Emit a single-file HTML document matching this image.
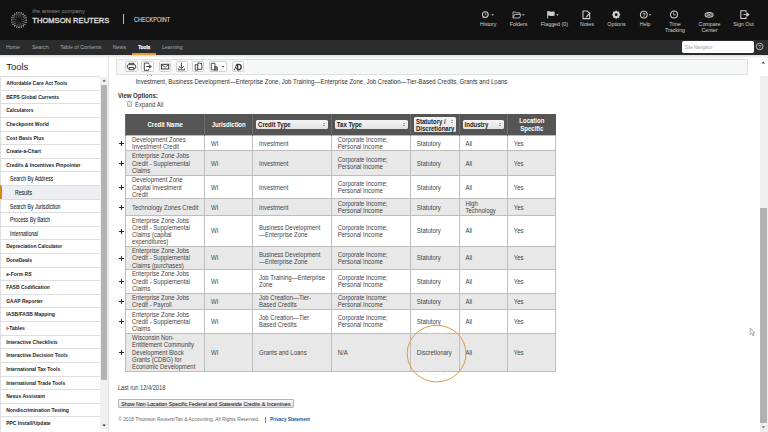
<!DOCTYPE html>
<html><head><meta charset="utf-8"><style>
*{box-sizing:border-box;margin:0;padding:0}
html,body{width:768px;height:432px;overflow:hidden;background:#fff;font-family:"Liberation Sans",sans-serif;position:relative}
.abs{position:absolute}
#hdr{left:0;top:0;width:768px;height:39.5px;background:#121212}
#nav{left:0;top:39.5px;width:768px;height:15px;background:#2b2c2e}
#shadow{left:0;top:54.5px;width:768px;height:3px;background:linear-gradient(#dcdcdc,#fff)}
.nv{position:absolute;top:44px;font-size:5.3px;color:#a9abae;line-height:6px;white-space:nowrap}
.hi{position:absolute;font-size:5.3px;color:#d2d2d2;line-height:6.3px;text-align:center;white-space:nowrap}
.si{position:absolute;left:0;width:100px;height:13.6px;border-top:0.6px solid #dedede;font-size:5px;font-weight:bold;color:#222;line-height:13px;padding-left:6.2px;white-space:nowrap}
.si.sub{font-weight:normal;padding-left:10px;color:#333}
.si.res{padding-left:13px;background:#eceef1;border-left:2px solid #d9850f;font-weight:normal}
#tb{left:116.3px;top:59.1px;width:631.7px;height:15.8px;background:#f6f7f7;border:0.6px solid #dfdfdf}
.btn{position:absolute;top:61px;height:10.8px;width:13px;background:#fff;border:0.6px solid #cfcfcf;border-radius:1.6px}
table{position:absolute;left:125.5px;top:114.2px;width:430.3px;border-collapse:collapse;table-layout:fixed;font-size:6px;color:#333}
th{background:#555;color:#fff;font-weight:bold;height:21.2px;border-left:0.6px solid #6d6d6d;text-align:center;line-height:7.4px;padding:0}
td{border:0.6px solid #bdbdbd;line-height:7.2px;padding:0 0 0 5.9px;vertical-align:middle}
td span{display:inline-block;transform:translateY(0.6px) scaleY(1.17);transform-origin:50% 60%;color:#444}
tr.g td{background:#e8e8e8}
.sel{display:block;margin:0 2.4px 0 3px;height:9.2px;background:linear-gradient(#f4f4f4,#e2e2e2);border-radius:1.5px;color:#222;text-align:left;padding-left:2px;line-height:9.2px;position:relative}
.sel.tall{height:15px;line-height:7.2px;padding-top:0.5px}
.sel:after{content:"";position:absolute;right:3px;top:3px;width:0;height:0;border-left:0.9px solid transparent;border-right:0.9px solid transparent;border-bottom:1.2px solid #555}
.sel:before{content:"";position:absolute;right:3px;top:5px;width:0;height:0;border-left:0.9px solid transparent;border-right:0.9px solid transparent;border-top:1.2px solid #555}
.plus{position:absolute;left:118.8px;width:5px;height:5px}
.plus:before{content:"";position:absolute;left:0;top:2px;width:5px;height:1px;background:#2a2a2a}
.plus:after{content:"";position:absolute;left:2px;top:0;width:1px;height:5px;background:#2a2a2a}

.sy{transform:scaleY(1.17);transform-origin:0 60%}

.si span{display:inline-block;transform:scaleY(1.15);transform-origin:0 55%}
.si.sub,.si.res{color:#111;font-size:5.1px}
.si.sub span,.si.res span{transform:translateY(0.9px) scaleY(1.26);-webkit-text-stroke:0.04px #111}
th i{font-style:normal;display:inline-block;transform:translateY(1.3px) scaleY(1.12);transform-origin:0 55%}
tr.r1 td span{transform:translateY(0.6px) scaleY(1.17)}

</style></head><body>
<div id="hdr" class="abs"></div><div id="nav" class="abs"></div><div id="shadow" class="abs"></div>
<svg class="abs" style="left:9.7px;top:10.9px" width="18" height="18" viewBox="0 0 18 18"><circle cx="16.40" cy="9.00" r="0.62" fill="#e6e6e6"/><circle cx="16.04" cy="11.29" r="0.62" fill="#e6e6e6"/><circle cx="14.99" cy="13.35" r="0.62" fill="#e6e6e6"/><circle cx="13.35" cy="14.99" r="0.62" fill="#e6e6e6"/><circle cx="11.29" cy="16.04" r="0.62" fill="#e6e6e6"/><circle cx="9.00" cy="16.40" r="0.62" fill="#e6e6e6"/><circle cx="6.71" cy="16.04" r="0.62" fill="#e6e6e6"/><circle cx="4.65" cy="14.99" r="0.62" fill="#e6e6e6"/><circle cx="3.01" cy="13.35" r="0.62" fill="#e6e6e6"/><circle cx="1.96" cy="11.29" r="0.62" fill="#e6e6e6"/><circle cx="1.60" cy="9.00" r="0.62" fill="#e6e6e6"/><circle cx="1.96" cy="6.71" r="0.62" fill="#e6e6e6"/><circle cx="3.01" cy="4.65" r="0.62" fill="#e6e6e6"/><circle cx="4.65" cy="3.01" r="0.62" fill="#e6e6e6"/><circle cx="6.71" cy="1.96" r="0.62" fill="#e6e6e6"/><circle cx="9.00" cy="1.60" r="0.62" fill="#e6e6e6"/><circle cx="11.29" cy="1.96" r="0.62" fill="#e6e6e6"/><circle cx="13.35" cy="3.01" r="0.62" fill="#e6e6e6"/><circle cx="14.99" cy="4.65" r="0.62" fill="#e6e6e6"/><circle cx="16.04" cy="6.71" r="0.62" fill="#e6e6e6"/><circle cx="14.69" cy="11.21" r="0.5" fill="#b8b8b8"/><circle cx="13.59" cy="13.02" r="0.5" fill="#b8b8b8"/><circle cx="11.94" cy="14.35" r="0.5" fill="#b8b8b8"/><circle cx="9.93" cy="15.03" r="0.5" fill="#b8b8b8"/><circle cx="7.82" cy="14.98" r="0.5" fill="#b8b8b8"/><circle cx="5.84" cy="14.22" r="0.5" fill="#b8b8b8"/><circle cx="4.25" cy="12.82" r="0.5" fill="#b8b8b8"/><circle cx="3.23" cy="10.97" r="0.5" fill="#b8b8b8"/><circle cx="2.90" cy="8.87" r="0.5" fill="#b8b8b8"/><circle cx="3.31" cy="6.79" r="0.5" fill="#b8b8b8"/><circle cx="4.41" cy="4.98" r="0.5" fill="#b8b8b8"/><circle cx="6.06" cy="3.65" r="0.5" fill="#b8b8b8"/><circle cx="8.07" cy="2.97" r="0.5" fill="#b8b8b8"/><circle cx="10.18" cy="3.02" r="0.5" fill="#b8b8b8"/><circle cx="12.16" cy="3.78" r="0.5" fill="#b8b8b8"/><circle cx="13.75" cy="5.18" r="0.5" fill="#b8b8b8"/><circle cx="14.77" cy="7.03" r="0.5" fill="#b8b8b8"/><circle cx="15.10" cy="9.13" r="0.5" fill="#b8b8b8"/><circle cx="12.54" cy="12.24" r="0.45" fill="#9a9a9a"/><circle cx="10.92" cy="13.40" r="0.45" fill="#9a9a9a"/><circle cx="8.97" cy="13.80" r="0.45" fill="#9a9a9a"/><circle cx="7.02" cy="13.37" r="0.45" fill="#9a9a9a"/><circle cx="5.41" cy="12.19" r="0.45" fill="#9a9a9a"/><circle cx="4.42" cy="10.45" r="0.45" fill="#9a9a9a"/><circle cx="4.23" cy="8.47" r="0.45" fill="#9a9a9a"/><circle cx="4.86" cy="6.57" r="0.45" fill="#9a9a9a"/><circle cx="6.21" cy="5.10" r="0.45" fill="#9a9a9a"/><circle cx="8.03" cy="4.30" r="0.45" fill="#9a9a9a"/><circle cx="10.03" cy="4.31" r="0.45" fill="#9a9a9a"/><circle cx="11.85" cy="5.14" r="0.45" fill="#9a9a9a"/><circle cx="13.17" cy="6.63" r="0.45" fill="#9a9a9a"/><circle cx="13.78" cy="8.53" r="0.45" fill="#9a9a9a"/><circle cx="13.55" cy="10.52" r="0.45" fill="#9a9a9a"/><circle cx="10.60" cy="12.22" r="0.42" fill="#8a8a8a"/><circle cx="8.60" cy="12.58" r="0.42" fill="#8a8a8a"/><circle cx="6.73" cy="11.80" r="0.42" fill="#8a8a8a"/><circle cx="5.58" cy="10.13" r="0.42" fill="#8a8a8a"/><circle cx="5.51" cy="8.10" r="0.42" fill="#8a8a8a"/><circle cx="6.56" cy="6.36" r="0.42" fill="#8a8a8a"/><circle cx="8.37" cy="5.46" r="0.42" fill="#8a8a8a"/><circle cx="10.39" cy="5.68" r="0.42" fill="#8a8a8a"/><circle cx="11.96" cy="6.96" r="0.42" fill="#8a8a8a"/><circle cx="12.60" cy="8.88" r="0.42" fill="#8a8a8a"/><circle cx="12.09" cy="10.85" r="0.42" fill="#8a8a8a"/><circle cx="9.23" cy="11.49" r="0.38" fill="#6a6a6a"/><circle cx="7.19" cy="10.73" r="0.38" fill="#6a6a6a"/><circle cx="6.52" cy="8.67" r="0.38" fill="#6a6a6a"/><circle cx="7.72" cy="6.86" r="0.38" fill="#6a6a6a"/><circle cx="9.88" cy="6.66" r="0.38" fill="#6a6a6a"/><circle cx="11.38" cy="8.22" r="0.38" fill="#6a6a6a"/><circle cx="11.09" cy="10.38" r="0.38" fill="#6a6a6a"/></svg>
<div class="abs" style="left:32.3px;top:8.4px;font-size:5.7px;color:#8a8a8a;line-height:6px;white-space:nowrap">the answer company</div>
<div class="abs" style="left:32.3px;top:16.9px;font-size:7.5px;color:#e0e0e0;-webkit-text-stroke:0.3px #e0e0e0;line-height:8px;white-space:nowrap;letter-spacing:0.05px">THOMSON REUTERS</div>
<div class="abs" style="left:123px;top:14px;width:0.8px;height:10px;background:#bdbdbd"></div>
<div class="abs" style="left:134.4px;top:16.6px;font-size:6.4px;color:#dcdcdc;-webkit-text-stroke:0.1px #dcdcdc;line-height:6px;white-space:nowrap;transform:scaleX(0.86);transform-origin:0 50%">CHECKPOINT</div>
<div class="nv" style="left:5.9px;">Home</div>
<div class="nv" style="left:31.9px;">Search</div>
<div class="nv" style="left:60.2px;">Table of Contents</div>
<div class="nv" style="left:112.8px;">News</div>
<div class="nv" style="left:137.9px;color:#fff;-webkit-text-stroke:0.25px #fff">Tools</div>
<div class="nv" style="left:161.9px;">Learning</div>
<div class="abs" style="left:131.9px;top:53.2px;width:24.2px;height:1.4px;background:#e89a2c"></div>
<div class="hi" style="left:458.2px;width:60px;top:21px">History</div>
<div class="hi" style="left:488.5px;width:60px;top:21px">Folders</div>
<div class="hi" style="left:524.4px;width:60px;top:21px">Flagged (0)</div>
<div class="hi" style="left:557px;width:60px;top:21px">Notes</div>
<div class="hi" style="left:586.5px;width:60px;top:21px">Options</div>
<div class="hi" style="left:615.1px;width:60px;top:21px">Help</div>
<div class="hi" style="left:645px;width:60px;top:21px">Time<br>Tracking</div>
<div class="hi" style="left:679.5px;width:60px;top:21px">Compare<br>Center</div>
<div class="hi" style="left:713.5px;width:60px;top:21px">Sign Out</div>
<svg class="abs" style="left:480px;top:9px" width="100" height="11" viewBox="0 0 100 11">
<!-- history -->
<circle cx="5.3" cy="5.6" r="2.9" fill="none" stroke="#d0d0d0" stroke-width="1.05"/>
<path d="M5.3 4.2 V5.8 H6.6" fill="none" stroke="#d0d0d0" stroke-width="0.7"/>
<path d="M2.2 7.5 L3.2 9.2 L4.5 8" fill="#d0d0d0"/>
<path d="M11.3 5.3 h2.6 l-1.3 1.4z" fill="#d0d0d0"/>
<!-- folders -->
<path d="M33 3 h2.8 l0.8 0.9 h3.4 v1.2 M33 3 v6 h6.6 l1.2 -3.6 h-6.3 l-1.4 3.6" fill="none" stroke="#d0d0d0" stroke-width="0.8"/>
<path d="M42.1 5.3 h2.6 l-1.3 1.4z" fill="#d0d0d0"/>
<!-- flag -->
<path d="M67.6 2 v7.5" stroke="#d0d0d0" stroke-width="0.9"/>
<path d="M68 2.5 c1.5-0.7 2.6 0.6 4 0.2 c0.8-0.2 1.7-0.3 2.6 0 v4.1 c-1.2-0.4-2.1 0-3 0.2 c-1.3 0.3-2.3-0.8-3.6-0.3z" fill="#d0d0d0"/>
<path d="M76.2 5.3 h2.6 l-1.3 1.4z" fill="#d0d0d0"/>
</svg>
<svg class="abs" style="left:580px;top:9px" width="188" height="11" viewBox="0 0 188 11">
<!-- notes -->
<path d="M3 2 h4.2 l2.5 2.5 v5.1 h-6.7z" fill="none" stroke="#d0d0d0" stroke-width="1.05"/>
<path d="M6 7.5 l3.8-4.2 l0.9 0.8 l-3.8 4.2 l-1.2 0.3z" fill="#d0d0d0"/>
<!-- options gear -->
<g transform="translate(36.2,5.7)">
<circle r="2.6" fill="none" stroke="#d0d0d0" stroke-width="1.5"/>
<g fill="#d0d0d0">
<rect x="-0.8" y="-4" width="1.6" height="8"/>
<rect x="-0.8" y="-4" width="1.6" height="8" transform="rotate(45)"/>
<rect x="-0.8" y="-4" width="1.6" height="8" transform="rotate(90)"/>
<rect x="-0.8" y="-4" width="1.6" height="8" transform="rotate(135)"/>
</g>
<circle r="1.4" fill="#121212"/>
</g>
<!-- help -->
<circle cx="63.8" cy="5.6" r="3.4" fill="none" stroke="#d0d0d0" stroke-width="1.05"/>
<text x="63.8" y="7.7" font-size="5.4" font-family="Liberation Sans" font-weight="bold" fill="#d0d0d0" text-anchor="middle">?</text>
<path d="M68.7 5.3 h2.6 l-1.3 1.4z" fill="#d0d0d0"/>
<!-- time tracking clock -->
<circle cx="94" cy="5.5" r="3.5" fill="none" stroke="#d0d0d0" stroke-width="1.05"/>
<path d="M93.6 3.4 V5.9 H95.8" fill="none" stroke="#d0d0d0" stroke-width="0.8"/>
<!-- compare -->
<ellipse cx="129.1" cy="5.8" rx="4" ry="2.4" fill="none" stroke="#d0d0d0" stroke-width="1.05"/>
<circle cx="127.9" cy="5.8" r="1.15" fill="none" stroke="#d0d0d0" stroke-width="0.8"/><circle cx="130.3" cy="5.8" r="1.15" fill="none" stroke="#d0d0d0" stroke-width="0.8"/>
<!-- sign out -->
<path d="M166 3.3 v-1.5 h-5.2 v7.6 h5.2 v-1.5" fill="none" stroke="#d0d0d0" stroke-width="1.05"/>
<path d="M163.5 5.6 h3.3 v-1.8 l2.3 1.8 l-2.3 1.8 v-1.8" fill="#d0d0d0" stroke="#d0d0d0" stroke-width="0.9"/>
</svg>
<div class="abs" style="left:681.5px;top:41.1px;width:72.7px;height:11.5px;background:#fff;border-radius:1.8px"></div>
<div class="abs" style="left:684.7px;top:43.8px;font-size:5px;color:#a0a0a0;line-height:6px;white-space:nowrap;transform:scaleX(0.88) scaleY(1.05);transform-origin:0 50%">Site Navigator</div>
<svg class="abs" style="left:755px;top:42px" width="10" height="10" viewBox="0 0 10 10">
<circle cx="4.6" cy="4.5" r="3.3" fill="none" stroke="#d4d4d4" stroke-width="0.8"/>
<text x="4.6" y="6.5" font-size="5" font-family="Liberation Sans" fill="#d4d4d4" text-anchor="middle">?</text></svg>
<div class="abs" style="left:108.3px;top:54.5px;width:0.7px;height:377.5px;background:#e2e2e2"></div>
<div class="abs" style="left:6.2px;top:60.5px;font-size:9.5px;color:#222;line-height:11px;white-space:nowrap">Tools</div>
<div class="abs" style="left:0;top:76.9px;width:0.6px;height:356px;background:#dedede"></div>
<div class="si " style="top:76.10px"><span>Affordable Care Act Tools</span></div>
<div class="si " style="top:89.71px"><span>BEPS Global Currents</span></div>
<div class="si " style="top:103.32px"><span>Calculators</span></div>
<div class="si " style="top:116.93px"><span>Checkpoint World</span></div>
<div class="si " style="top:130.54px"><span>Cost Basis Plus</span></div>
<div class="si " style="top:144.15px"><span>Create-a-Chart</span></div>
<div class="si " style="top:157.76px"><span>Credits &amp; Incentives Pinpointer</span></div>
<div class="si sub" style="top:171.37px"><span>Search By Address</span></div>
<div class="si res" style="top:184.98px"><span>Results</span></div>
<div class="si sub" style="top:198.59px"><span>Search By Jurisdiction</span></div>
<div class="si sub" style="top:212.20px"><span>Process By Batch</span></div>
<div class="si sub" style="top:225.81px"><span>International</span></div>
<div class="si " style="top:239.42px"><span>Depreciation Calculator</span></div>
<div class="si " style="top:253.03px"><span>DoneDeals</span></div>
<div class="si " style="top:266.64px"><span>e-Form <i>RS</i></span></div>
<div class="si " style="top:280.25px"><span>FASB Codification</span></div>
<div class="si " style="top:293.86px"><span>GAAP Reporter</span></div>
<div class="si " style="top:307.47px"><span>IASB/FASB Mapping</span></div>
<div class="si " style="top:321.08px"><span>i-Tables</span></div>
<div class="si " style="top:334.69px"><span>Interactive Checklists</span></div>
<div class="si " style="top:348.30px"><span>Interactive Decision Tools</span></div>
<div class="si " style="top:361.91px"><span>International Tax Tools</span></div>
<div class="si " style="top:375.52px"><span>International Trade Tools</span></div>
<div class="si " style="top:389.13px"><span>Nexus Assistant</span></div>
<div class="si " style="top:402.74px"><span>Nondiscrimination Testing</span></div>
<div class="si " style="top:416.35px"><span>PPC Install/Update</span></div>
<div class="abs" style="left:100px;top:76.9px;width:8.3px;height:352.5px;background:#f0f0f0"></div>
<div class="abs" style="left:100.6px;top:85px;width:6.6px;height:295px;background:#b3b3b3"></div>
<svg class="abs" style="left:100px;top:78px" width="8.3" height="5" viewBox="0 0 8.3 5"><path d="M2.4 3.6 h3.5 l-1.75-2z" fill="#555"/></svg>
<svg class="abs" style="left:100px;top:423px" width="8.3" height="5" viewBox="0 0 8.3 5"><path d="M2.4 1.4 h3.5 l-1.75 2z" fill="#333"/></svg>
<div class="abs" style="left:760.2px;top:76px;width:7.8px;height:356px;background:#efefef"></div>
<div class="abs" style="left:760.4px;top:207.8px;width:6.8px;height:215.4px;background:#b2b2b2"></div>
<svg class="abs" style="left:759.4px;top:60px" width="8.6" height="5" viewBox="0 0 8.6 5"><path d="M2.5 3.6 h3.6 l-1.8-2z" fill="#444"/></svg>
<svg class="abs" style="left:759.4px;top:425px" width="8.6" height="5" viewBox="0 0 8.6 5"><path d="M2.5 1.2 h3.6 l-1.8 2z" fill="#777"/></svg>
<div id="tb" class="abs"></div>
<div class="btn" style="left:124.5px;width:13px"></div>
<div class="btn" style="left:141.4px;width:12.9px"></div>
<div class="btn" style="left:158.9px;width:12.4px"></div>
<div class="btn" style="left:175.5px;width:12.4px"></div>
<div class="btn" style="left:192.1px;width:12.1px"></div>
<div class="btn" style="left:208.8px;width:18.6px"></div>
<div class="btn" style="left:231.5px;width:12.6px"></div>
<svg class="abs" style="left:118px;top:58px" width="130" height="18" viewBox="0 0 130 18">
<!-- print -->
<g fill="#fff" stroke="#3a3a3a" stroke-width="0.95">
<rect x="11.2" y="5.3" width="4.6" height="2" />
<rect x="9.3" y="6.7" width="8.4" height="3.9" rx="1.3"/>
<rect x="11.2" y="9.5" width="4.6" height="2.3"/>
</g>
<!-- export -->
<path d="M30.7 6.3 V5.1 H26.3 V12.3 H30.7 V11.1" fill="none" stroke="#3a3a3a" stroke-width="0.95"/>
<path d="M28.3 8 h2.8 v-1.6 l2.8 2.1 l-2.8 2.1 v-1.6 h-2.8z" fill="#3a3a3a"/>
<!-- email -->
<rect x="43.4" y="6.3" width="7.3" height="4.7" fill="none" stroke="#3a3a3a" stroke-width="1.05"/>
<path d="M43.6 6.7 l3.5 2.5 l3.5-2.5" fill="none" stroke="#3a3a3a" stroke-width="0.8"/>
<!-- download -->
<path d="M63.4 4.9 v5.6 M61 8.2 l2.4 2.4 l2.4-2.4 M60.4 10.6 v1.3 h6.1 v-1.3" fill="none" stroke="#3a3a3a" stroke-width="0.95"/>
<!-- copy -->
<path d="M77.2 6.6 h2.8 v5.5 h-2.8z" fill="#fff" stroke="#3a3a3a" stroke-width="0.9"/>
<path d="M79.8 5.1 h2.4 l1.6 1.6 v4.6 h-4z" fill="#fff" stroke="#3a3a3a" stroke-width="0.9"/>
<path d="M82 5 l1.9 1.9 v-1.9z" fill="#3a3a3a"/>
<!-- doc dropdown -->
<path d="M93.3 5.3 h3.6 v6.6 h-3.6z" fill="#fff" stroke="#3a3a3a" stroke-width="0.9"/>
<path d="M96.6 8.3 h1.9 l1 1 v3 h-2.9z" fill="#777" stroke="#3a3a3a" stroke-width="0.6"/>
<path d="M103.9 8 h2.6 l-1.3 1.4z" fill="#3a3a3a"/>
<!-- AD -->
<path d="M116.4 12.1 L118.9 5.8" stroke="#3a3a3a" stroke-width="1"/>
<path d="M119.6 6.4 h1 c1.7 0 2.6 1.1 2.6 2.7 c0 1.6 -0.9 2.7 -2.6 2.7 h-1 z" fill="none" stroke="#3a3a3a" stroke-width="1.4"/>
<path d="M118.2 9.6 l1.2 2.2" stroke="#3a3a3a" stroke-width="0.9"/>
</svg>
<div class="abs sy" style="left:135.7px;top:79.2px;font-size:6px;color:#333;line-height:7px;white-space:nowrap">Investment, Business Development—Enterprise Zone, Job Training—Enterprise Zone, Job Creation—Tier-Based Credits, Grants and Loans</div>
<div class="abs" style="left:147px;top:74.6px;width:1px;height:1px;background:#999"></div><div class="abs" style="left:150.5px;top:74.6px;width:1px;height:1px;background:#999"></div>
<div class="abs sy" style="left:117.9px;top:92.7px;font-size:6px;font-weight:bold;color:#333;line-height:7px;white-space:nowrap">View Options:</div>
<div class="abs" style="left:127.3px;top:101.3px;width:4.8px;height:5.4px;border:0.6px solid #b0b0b0;background:linear-gradient(#f4f4f4,#dcdcdc);border-radius:1px"></div>
<div class="abs sy" style="left:135px;top:101.9px;font-size:6px;color:#444;line-height:7px;white-space:nowrap">Expand All</div>
<table style="left:125.1px"><colgroup><col style="width:79.1px"><col style="width:47.9px"><col style="width:78.75px"><col style="width:79.15px"><col style="width:48.6px"><col style="width:48.3px"><col style="width:48.5px"></colgroup><tr><th><i>Credit Name</i></th><th><i>Jurisdiction</i></th><th><span class="sel"><i>Credit Type</i></span></th><th><span class="sel"><i>Tax Type</i></span></th><th><span class="sel tall"><i>Statutory /</i><br><i>Discretionary</i></span></th><th><span class="sel"><i>Industry</i></span></th><th><i>Location</i><br><i>Specific</i></th></tr><tr class="w r1" style="height:15.6px"><td><span>Development Zones</span><br><span>Investment Credit</span></td><td><span>WI</span></td><td><span>Investment</span></td><td><span>Corporate Income;</span><br><span>Personal Income</span></td><td><span>Statutory</span></td><td><span>All</span></td><td><span>Yes</span></td></tr><tr class="g" style="height:24.3px"><td><span>Enterprise Zone Jobs</span><br><span>Credit - Supplemental</span><br><span>Claims</span></td><td><span>WI</span></td><td><span>Investment</span></td><td><span>Corporate Income;</span><br><span>Personal Income</span></td><td><span>Statutory</span></td><td><span>All</span></td><td><span>Yes</span></td></tr><tr class="w" style="height:23.7px"><td><span>Development Zone</span><br><span>Capital Investment</span><br><span>Credit</span></td><td><span>WI</span></td><td><span>Investment</span></td><td><span>Corporate Income;</span><br><span>Personal Income</span></td><td><span>Statutory</span></td><td><span>All</span></td><td><span>Yes</span></td></tr><tr class="g" style="height:16.4px"><td><span>Technology Zones Credit</span></td><td><span>WI</span></td><td><span>Investment</span></td><td><span>Corporate Income;</span><br><span>Personal Income</span></td><td><span>Statutory</span></td><td><span>High</span><br><span>Technology</span></td><td><span>Yes</span></td></tr><tr class="w" style="height:31.2px"><td><span>Enterprise Zone Jobs</span><br><span>Credit - Supplemental</span><br><span>Claims (capital</span><br><span>expenditures)</span></td><td><span>WI</span></td><td><span>Business Development</span><br><span>—Enterprise Zone</span></td><td><span>Corporate Income;</span><br><span>Personal Income</span></td><td><span>Statutory</span></td><td><span>All</span></td><td><span>Yes</span></td></tr><tr class="g" style="height:22.8px"><td><span>Enterprise Zone Jobs</span><br><span>Credit - Supplemental</span><br><span>Claims (purchases)</span></td><td><span>WI</span></td><td><span>Business Development</span><br><span>—Enterprise Zone</span></td><td><span>Corporate Income;</span><br><span>Personal Income</span></td><td><span>Statutory</span></td><td><span>All</span></td><td><span>Yes</span></td></tr><tr class="w" style="height:23.9px"><td><span>Enterprise Zone Jobs</span><br><span>Credit - Supplemental</span><br><span>Claims</span></td><td><span>WI</span></td><td><span>Job Training—Enterprise</span><br><span>Zone</span></td><td><span>Corporate Income;</span><br><span>Personal Income</span></td><td><span>Statutory</span></td><td><span>All</span></td><td><span>Yes</span></td></tr><tr class="g" style="height:16.0px"><td><span>Enterprise Zone Jobs</span><br><span>Credit - Payroll</span></td><td><span>WI</span></td><td><span>Job Creation—Tier-</span><br><span>Based Credits</span></td><td><span>Corporate Income;</span><br><span>Personal Income</span></td><td><span>Statutory</span></td><td><span>All</span></td><td><span>Yes</span></td></tr><tr class="w" style="height:24.2px"><td><span>Enterprise Zone Jobs</span><br><span>Credit - Supplemental</span><br><span>Claims</span></td><td><span>WI</span></td><td><span>Job Creation—Tier</span><br><span>Based Credits</span></td><td><span>Corporate Income;</span><br><span>Personal Income</span></td><td><span>Statutory</span></td><td><span>All</span></td><td><span>Yes</span></td></tr><tr class="g" style="height:37.6px"><td><span>Wisconsin Non-</span><br><span>Entitlement Community</span><br><span>Development Block</span><br><span>Grants (CDBG) for</span><br><span>Economic Development</span></td><td><span>WI</span></td><td><span>Grants and Loans</span></td><td><span>N/A</span></td><td><span>Discretionary</span></td><td><span>All</span></td><td><span>Yes</span></td></tr></table>
<div class="plus" style="top:140.80px"></div>
<div class="plus" style="top:160.75px"></div>
<div class="plus" style="top:184.75px"></div>
<div class="plus" style="top:204.80px"></div>
<div class="plus" style="top:228.60px"></div>
<div class="plus" style="top:255.60px"></div>
<div class="plus" style="top:278.95px"></div>
<div class="plus" style="top:298.90px"></div>
<div class="plus" style="top:319.00px"></div>
<div class="plus" style="top:349.90px"></div>
<div class="abs sy" style="left:117.9px;top:385.2px;font-size:5.7px;color:#3a3a3a;line-height:7px;white-space:nowrap">Last run 12/4/2018</div>
<div class="abs" style="left:118.2px;top:399px;width:176.3px;height:8.6px;background:linear-gradient(#f8f8f8,#e0e0e0);border:0.6px solid #b4b4b4;border-radius:1px"></div>
<div class="abs sy" style="left:121.2px;top:401.3px;font-size:5.32px;color:#222;-webkit-text-stroke:0.05px #222;line-height:6px;white-space:nowrap">Show Non Location Specific Federal and Statewide Credits &amp; Incentives</div>
<div class="abs sy" style="left:118.2px;top:417px;font-size:4.88px;color:#666;line-height:6px;white-space:nowrap">© 2018 Thomson Reuters/Tax &amp; Accounting. All Rights Reserved.</div>
<div class="abs" style="left:264.8px;top:416.6px;width:0.6px;height:6px;background:#888"></div>
<div class="abs sy" style="left:270px;top:417px;font-size:4.64px;font-weight:bold;color:#25548a;line-height:6px;white-space:nowrap">Privacy Statement</div>
<svg class="abs" style="left:400px;top:318px" width="80" height="72" viewBox="0 0 80 72"><ellipse cx="36.6" cy="35.6" rx="29.4" ry="28.3" fill="none" stroke="#e39a3c" stroke-width="1"/><circle cx="36.5" cy="35.6" r="21" fill="none" stroke="#e8dcd0" stroke-width="0.4"/></svg>
<svg class="abs" style="left:749px;top:327px" width="8" height="10" viewBox="0 0 8 10"><path d="M1.1 1.1 v6.6 l1.6-1.4 l1.3 2.6 l1-0.5 l-1.3-2.5 h2.3z" fill="#fff" stroke="#8a8a8a" stroke-width="0.7"/></svg>
</body></html>
